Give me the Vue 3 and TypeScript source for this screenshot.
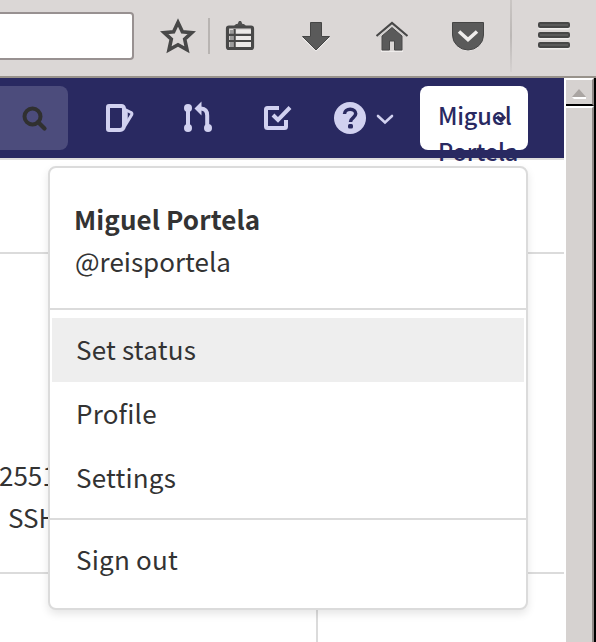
<script setup lang="ts">
interface MenuItem {
  label: string
  active?: boolean
}
const items: MenuItem[] = [{ label: 'Set status', active: true }, { label: 'Profile' }, { label: 'Settings' }]
const bars: number[] = [22, 32, 42]
</script>

<template>
  <div class="window">
    <div class="toolbar">
      <div class="urlbar"></div>
      <svg class="star" width="36" height="36" viewBox="160 18 36 36">
        <path d="M178 22.500l4.400 9.200 9.400 .9-7.100 6.500 2.300 10.700-9-5-9 5 2.300-10.700-7.100-6.500 9.400-.9z" fill="none" stroke="#484848" stroke-width="3.600" />
      </svg>
      <div class="separator"></div>
      <svg class="clip" width="32" height="34" viewBox="224 18 32 34">
        <path d="M233 27l3-3h1.500l1.500-3h2l1.500 3h1.500l3 3z" fill="#505050" />
        <rect x="227.500" y="27" width="25" height="21.500" rx="1.500" fill="none" stroke="#484848" stroke-width="3.200" />
        <rect x="230" y="30" width="3" height="17" fill="#9b9b9b" />
        <rect x="236" y="30" width="15" height="17" fill="#ebe9e8" />
        <path d="M229 34.800h22M229 41h22M234.600 29v19" stroke="#484848" stroke-width="2.200" fill="none" />
      </svg>
      <svg class="download" width="32" height="32" viewBox="300 20 32 32">
        <path d="M310 24h12v14h8L316 51.500 302 38h8z" fill="#efedec" />
        <path d="M310.500 22.500h11v14h8L316 50 302.500 36.500h8z" fill="#5a5a5a" stroke="#454545" />
      </svg>
      <svg class="home" width="34" height="32" viewBox="375 20 34 32">
        <path d="M381 51.500h22" stroke="#efedec" />
        <path d="M376.500 36L392 23l15.500 13" fill="none" stroke="#484848" stroke-width="2.200" />
        <path d="M378.500 37L392 26l13.500 11" fill="none" stroke="#d0cecd" stroke-width="1.400" />
        <path d="M382 50V36l10-8.500L402 36v14h-7.500V41h-5v9z" fill="#5a5a5a" stroke="#484848" />
      </svg>
      <svg class="pocket" width="36" height="32" viewBox="450 20 36 32">
        <path d="M453 24h30v12a15 15 0 0 1-30 0z" fill="#efedec" />
        <path d="M452.500 22.500h31V35a15.500 15 0 0 1-31 0z" fill="#5a5a5a" stroke="#454545" />
        <path d="M459 31.500l9 8 9-8" fill="none" stroke="#efedec" stroke-width="3.600" />
      </svg>
      <div class="separator tall"></div>
      <svg class="burger" width="34" height="32" viewBox="537 20 34 32">
        <g v-for="y in bars" :key="y">
          <rect x="538" :y="y + 2" width="32" height="5.500" rx="2" fill="#f1efee" />
          <rect x="538" :y="y" width="32" height="6" rx="2" fill="#474747" />
          <rect x="540" :y="y + 2" width="28" height="2" fill="#5b5b5b" />
        </g>
      </svg>
    </div>

    <div class="content">
      <main class="page">
        <nav class="navbar">
          <div class="search">
            <svg width="26" height="26" viewBox="0 0 26 26">
              <circle cx="10.500" cy="10.500" r="8" fill="none" stroke="#303030" stroke-width="4" />
              <path d="M16 16l6.500 6.500" stroke="#303030" stroke-width="4.300" stroke-linecap="round" />
            </svg>
          </div>
          <svg class="issues" width="30" height="28" viewBox="0 0 30 28" fill="none" stroke="#d1d1f0">
            <path d="M3 2h12.500a2.500 2.500 0 0 1 2.500 2.500V22a4 4 0 0 1-4 4H3a1 1 0 0 1-1-1V3a1 1 0 0 1 1-1z" stroke-width="4" />
            <path d="M19 5.500l6 3a1.500 1.500 0 0 1 .8 2L18.500 22.500" stroke-width="3" />
            <path d="M20.500 7v12" stroke-width="2.500" />
          </svg>
          <svg class="merge" width="30" height="32" viewBox="183 101 30 32" fill="#d1d1f0">
            <circle cx="188" cy="108" r="4" /><circle cx="188" cy="128" r="4" /><circle cx="208" cy="128" r="4" />
            <path d="M188 108v20" fill="none" stroke="#d1d1f0" stroke-width="4" />
            <path d="M201 108.500c4.500 .2 6.200 3 6.200 7V128" fill="none" stroke="#d1d1f0" stroke-width="4" />
            <path d="M194.500 108.500l7-7v14z" />
          </svg>
          <svg class="todo" width="30" height="28" viewBox="263 104 30 28" fill="none" stroke="#d1d1f0" stroke-width="4">
            <path d="M279 108h-11.500q-1.500 0-1.500 1.500v17q0 1.500 1.500 1.500h17q1.500 0 1.500-1.500V120" />
            <path d="M273 115l5 5 12-12.500" />
          </svg>
          <svg class="help" width="32" height="32" viewBox="0 0 32 32">
            <circle cx="16" cy="16" r="16" fill="#d1d1f0" />
            <path d="M10.500 12c0-3 2.500-4.700 5.700-4.700 3.300 0 5.500 1.700 5.500 4.500 0 3.800-5.200 3.700-5.200 8.200" fill="none" stroke="#292961" stroke-width="3.500" />
            <rect x="14" y="22" width="5" height="4.500" rx="1.500" fill="#292961" />
          </svg>
          <svg class="chevron" width="18" height="12" viewBox="0 0 18 12">
            <path d="M2 2l7 6.500L16 2" fill="none" stroke="#d1d1f0" stroke-width="2.600" stroke-linecap="round" />
          </svg>
          <div class="avatar">
            <span>Miguel<br />Portela</span>
            <svg class="caret" width="14" height="10" viewBox="0 0 14 10"><path d="M3 2.500l4 4 4-4" fill="none" stroke="#292961" stroke-width="3.500" /></svg>
          </div>
        </nav>
        <section class="blank"></section>
        <section class="panel">
          <p class="key">25519</p>
          <p class="ssh">SSH</p>
        </section>
        <section class="below"></section>

        <div class="menu">
          <header>
            <strong>Miguel Portela</strong>
            <span>@reisportela</span>
          </header>
          <ul>
            <li v-for="item in items" :key="item.label" :class="{ active: item.active }">{{ item.label }}</li>
          </ul>
          <footer>Sign out</footer>
        </div>
      </main>
      <aside class="scrollbar">
        <div class="up"><svg width="16" height="11" viewBox="0 0 16 11"><path d="M1 9h14v2H3z" fill="#fff" /><path d="M8 1l7 8H1z" fill="#aaa5a2" /></svg></div>
        <div class="thumb"></div>
      </aside>
    </div>
  </div>
</template>

<style>
body { margin: 0; background: #fff; overflow: hidden; }
</style>

<style scoped>
* { box-sizing: border-box; }
svg { display: block; flex: none; }
.window { width: 596px; height: 642px; overflow: hidden; display: flex; flex-direction: column; font-family: "Noto Sans CJK SC", "Noto Sans", sans-serif; font-size: 26px; color: #333; }
.toolbar { height: 78px; flex: none; display: flex; align-items: flex-start; background: #dbd7d6; border-bottom: 2px solid #98928b; }
.urlbar { width: 134px; height: 48px; margin-top: 12px; background: #fff; border: 2px solid #989191; border-left: 0; border-radius: 0 4px 4px 0; }
.star { margin: 18px 0 0 26px; }
.separator { width: 2px; height: 36px; margin: 18px 0 0 12px; background: #b8b4b2; }
.separator.tall { height: 72px; margin: 0 0 0 24px; background: linear-gradient(#cac6c4, #bbb7b5 50%, #d6d2d1); }
.clip { margin: 18px 0 0 14px; }
.download { margin: 20px 0 0 44px; }
.home { margin: 20px 0 0 43px; }
.pocket { margin: 20px 0 0 41px; }
.burger { margin: 20px 0 0 25px; }
.content { height: 564px; display: flex; }
.page { width: 564px; position: relative; display: flex; flex-direction: column; }
.navbar { height: 82px; flex: none; display: flex; background: #292961; border-bottom: 2px solid #dedddd; }
.search { width: 68px; height: 64px; margin-top: 8px; padding: 20px 0 0 22px; background: #4c4c7c; border-radius: 0 8px 8px 0; }
.issues { margin: 26px 0 0 38px; }
.merge { margin: 23px 0 0 47px; }
.todo { margin: 26px 0 0 50px; }
.help { margin: 24px 0 0 41px; }
.chevron { margin: 36px 0 0 10px; }
.avatar { position: relative; width: 108px; height: 64px; margin: 8px 0 0 26px; padding: 11px 0 0 18px; background: #fff; border-radius: 8px; color: #292961; font-size: 23.500px; line-height: 36px; font-weight: 500; letter-spacing: -.2px; }
.caret { position: absolute; left: 74px; top: 28px; }
.blank { height: 94px; flex: none; border-bottom: 2px solid #dbdbdb; }
.panel { height: 320px; flex: none; border-bottom: 2px solid #dbdbdb; padding-top: 200px; line-height: 42px; }
.panel p { margin: 0; }
.panel .key { margin-left: -1px; }
.panel .ssh { padding-left: 8px; }
.below { width: 318px; flex: 1; border-right: 2px solid #dbdbdb; }
.menu { position: absolute; left: 48px; top: 88px; width: 480px; height: 444px; background: #fff; border: 2px solid #dbdbdb; border-radius: 8px; box-shadow: 0 4px 8px rgba(0, 0, 0, .1); }
.menu header { height: 142px; padding: 30px 25px 0; border-bottom: 2px solid #dbdbdb; display: flex; flex-direction: column; line-height: 42px; }
.menu strong { font-weight: 700; margin-left: -1px; letter-spacing: .1px; }
.menu ul { list-style: none; margin: 0; padding: 8px 2px; height: 210px; border-bottom: 2px solid #dbdbdb; letter-spacing: .2px; }
.menu li { height: 64px; line-height: 62px; padding-left: 24px; }
.menu li.active { background: #eee; }
.menu footer { padding: 8px 26px; line-height: 62px; letter-spacing: .2px; }
.scrollbar { width: 32px; display: flex; flex-direction: column; border-right: 2px solid #000; border-left: 2px solid #fff; }
.up { height: 28px; display: flex; justify-content: center; padding-top: 8px; background: #d6d2d0; border-top: 2px solid #fff; border-right: 2px solid #8f8986; border-bottom: 2px solid #000; }
.thumb { flex: 1; background: #d6d2d0; border-top: 2px solid #fff; border-right: 2px solid #8f8986; }
</style>
